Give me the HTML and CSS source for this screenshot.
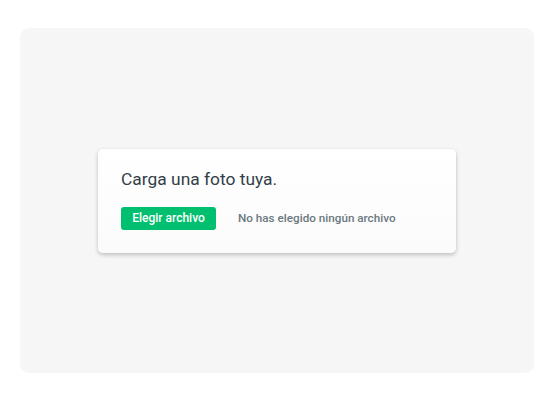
FILE: index.html
```html
<!DOCTYPE html>
<html lang="es">
<head>
<meta charset="utf-8">
<link rel="stylesheet" href="styles.css">
</head>
<body>
<div class="panel">
  <div class="card">
    <div class="title">Carga una foto tuya.</div>
    <div class="row">
      <span class="btn">Elegir archivo</span>
      <span class="status">No has elegido ningún archivo</span>
    </div>
  </div>
</div>
</body>
</html>
```
FILE: styles.css
```css
html, body {
  margin: 0;
  padding: 0;
  background: #ffffff;
}
body {
  padding: 28px 23px 27px 20px;
  font-family: "Roboto", "Liberation Sans", sans-serif;
}
.panel {
  width: 514px;
  height: 345px;
  background: #f6f6f6;
  border-radius: 9px;
  display: flex;
  align-items: center;
  justify-content: center;
}
.card {
  width: 358px;
  height: 104px;
  box-sizing: border-box;
  background: linear-gradient(180deg, #ffffff 0%, #fbfbfb 100%);
  border-radius: 5px;
  box-shadow: 0 2px 4px rgba(0,0,0,0.22), 0 0 2px rgba(0,0,0,0.06);
  padding: 19px 23px 0 23px;
}
.title {
  font-size: 17.4px;
  color: #333e48;
  line-height: 22px;
}
.row {
  display: flex;
  align-items: center;
  margin-top: 17px;
}
.btn {
  display: inline-flex;
  align-items: center;
  justify-content: center;
  width: 95px;
  height: 23px;
  background: #00bf6f;
  color: #ffffff;
  border-radius: 3px;
  font-size: 12px;
  font-weight: 500;
}
.status {
  margin-left: 22px;
  font-size: 11.7px;
  font-weight: 500;
  color: #6b787f;
}
```
